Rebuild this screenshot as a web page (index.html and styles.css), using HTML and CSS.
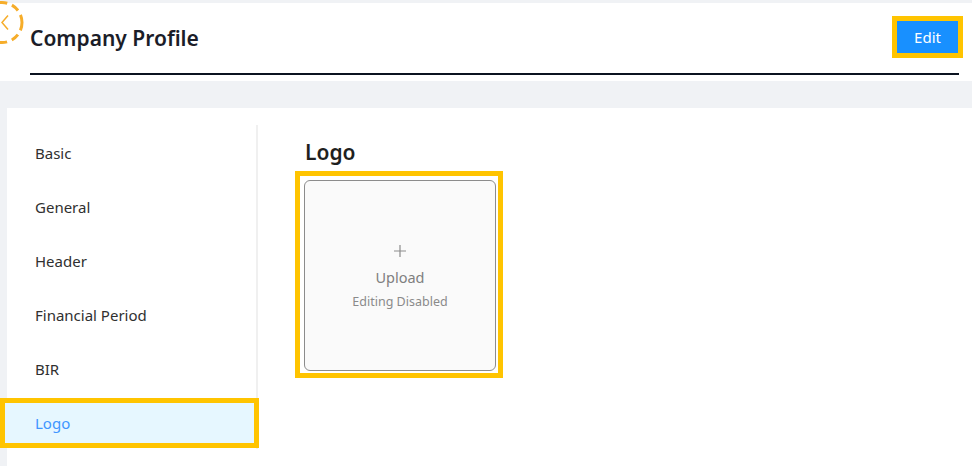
FILE: index.html
```html
<!DOCTYPE html>
<html lang="en">
<head>
<meta charset="utf-8">
<title>Company Profile</title>
<link rel="stylesheet" href="styles.css">
</head>
<body>
<div class="page">
  <svg class="back" width="46" height="46" viewBox="0 0 46 46" aria-hidden="true">
    <circle cx="24" cy="21.5" r="20" fill="none" stroke="#f6ad2a" stroke-width="3" stroke-dasharray="8 5"/>
    <path d="M30 14.5 L24 21.5 L30 28.5" fill="none" stroke="#f6ad2a" stroke-width="1.5"/>
  </svg>
  <header class="header">
    <div class="header-row">
      <h1 class="title">Company Profile</h1>
      <button class="edit-btn">Edit</button>
    </div>
    <div class="rule"></div>
  </header>
  <main class="card">
    <nav class="sidebar">
      <div class="item">Basic</div>
      <div class="item">General</div>
      <div class="item">Header</div>
      <div class="item">Financial Period</div>
      <div class="item">BIR</div>
      <div class="item active">Logo</div>
    </nav>
    <section class="content">
      <h2 class="section-title">Logo</h2>
      <div class="upload-wrap">
        <div class="upload">
          <svg class="plus" width="12" height="12" viewBox="0 0 12 12" aria-hidden="true">
            <path d="M6 0 V12 M0 6 H12" stroke="#8c8c8c" stroke-width="1.2" fill="none"/>
          </svg>
          <div class="upload-label">Upload</div>
          <div class="upload-note">Editing Disabled</div>
        </div>
      </div>
    </section>
  </main>
</div>
</body>
</html>
```
FILE: styles.css
```css
* { box-sizing: border-box; }
html, body { margin: 0; padding: 0; }
body {
  background: #f0f2f5;
  font-family: "Noto Sans", "Open Sans", sans-serif;
  color: #262626;
  width: 972px;
  height: 466px;
  overflow: hidden;
}
.page { position: relative; height: 466px; display: flex; flex-direction: column; }
.back { position: absolute; left: -22px; top: 1px; z-index: 2; }
.header {
  background: #fff;
  margin-top: 3px;
  padding: 18px 13px 6px 30px;
}
.header-row {
  display: flex;
  justify-content: space-between;
  align-items: center;
  height: 32px;
}
.title {
  margin: 0;
  font-size: 21px;
  font-weight: 600;
  line-height: 32px;
  padding-top: 2px;
  color: #1b1d28;
}
.edit-btn {
  width: 61px;
  height: 32px;
  margin-right: 1px;
  border: none;
  background: #1890ff;
  color: #fff;
  font-family: inherit;
  font-size: 15px;
  outline: 5px solid #ffc400;
  padding: 0;
}
.rule { height: 2px; background: #0b1320; margin-top: 20px; }
.card {
  flex: 1;
  margin: 27px 0 0 7px;
  background: #fff;
  padding-top: 17px;
  display: flex;
  align-items: flex-start;
}
.sidebar {
  width: 251px;
  border-right: 2px solid #f0f0f0;
  padding: 8px 0 6px;
  display: flex;
  flex-direction: column;
  gap: 14px;
}
.item {
  height: 40px;
  line-height: 40px;
  padding-left: 28px;
  font-size: 15px;
  color: #303030;
}
.item.active {
  background: #e6f7ff;
  color: #4096ff;
  outline: 5px solid #ffc400;
  margin: 0 2px 0 -2px;
  padding-left: 30px;
}
.content { padding: 13px 0 0 47px; }
.section-title {
  margin: 0 0 10px;
  font-size: 21px;
  font-weight: 600;
  line-height: 28px;
  color: #1f1f1f;
}
.upload-wrap {
  width: 198px;
  height: 197px;
  margin-left: -5px;
  outline: 5px solid #ffc400;
  padding: 4px 2px 2px 4px;
}
.upload {
  width: 100%;
  height: 100%;
  border: 1px solid #8c8c8c;
  border-radius: 6px;
  background: #fafafa;
  display: flex;
  flex-direction: column;
  align-items: center;
  justify-content: center;
  padding-top: 6px;
}
.plus { display: block; margin-bottom: 9px; }
.upload-label { font-size: 14.5px; line-height: 22px; color: #7f7f7f; }
.upload-note { font-size: 12.5px; line-height: 20px; color: #8a8a8a; margin-top: 4px; }
```
